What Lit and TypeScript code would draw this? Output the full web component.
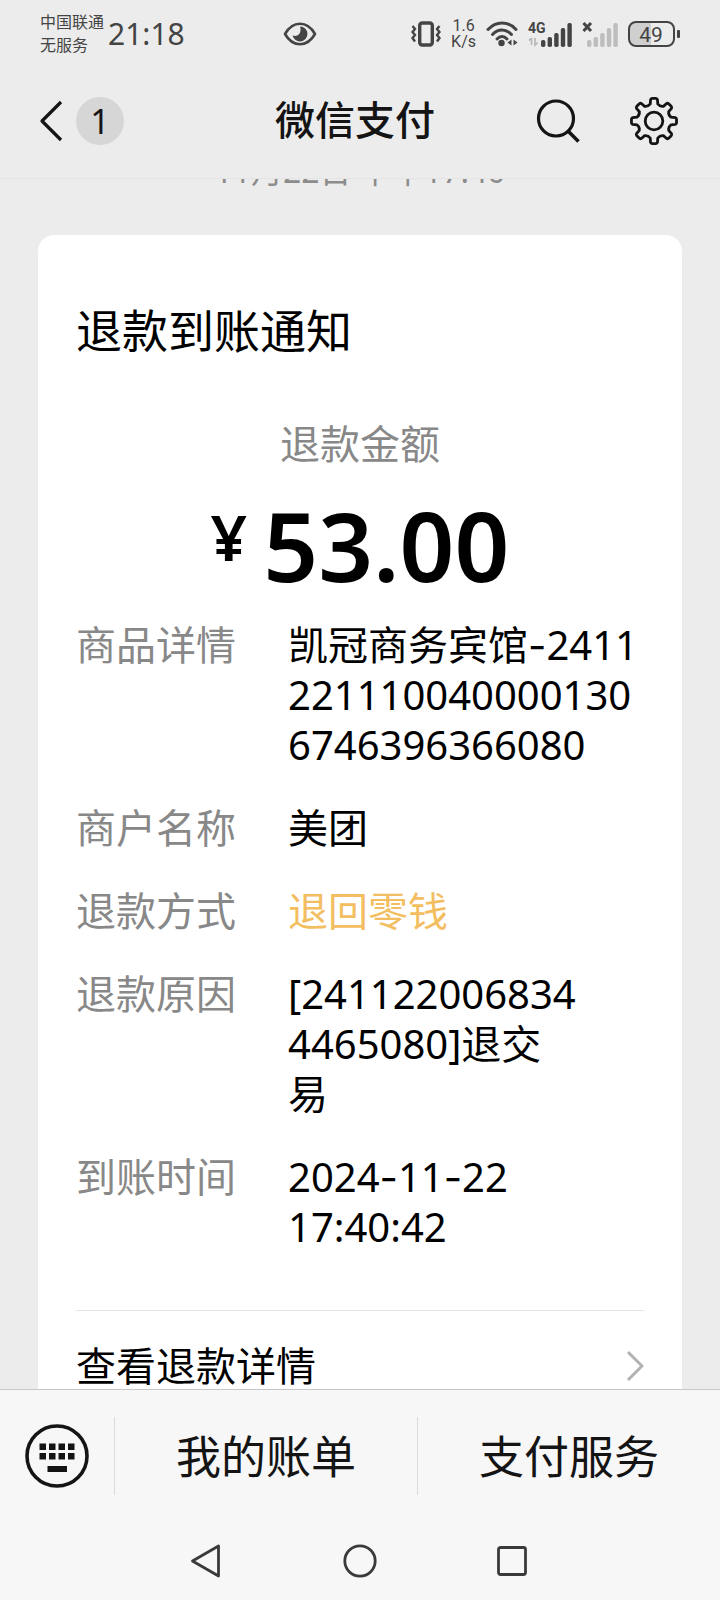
import { LitElement, html, svg, css } from "lit";
import { customElement, property } from "lit/decorators.js";

interface DetailRow {
  label: string;
  value: string;
  accent?: boolean;
}

const ROWS: DetailRow[] = [
  { label: "商品详情", value: "凯冠商务宾馆-2411\n221110040000130\n6746396366080" },
  { label: "商户名称", value: "美团" },
  { label: "退款方式", value: "退回零钱", accent: true },
  { label: "退款原因", value: "[241122006834\n4465080]退交\n易" },
  { label: "到账时间", value: "2024-11-22\n17:40:42" },
];

@customElement("status-bar")
export class StatusBar extends LitElement {
  static styles = css`
    :host {
      display: grid;
      grid-template-columns: 38% auto 1fr;
      align-items: center;
      height: 68px;
      padding: 0 40px;
      color: #444;
    }
    .left,
    .right {
      display: flex;
      align-items: center;
    }
    .left {
      gap: 4px;
    }
    .right {
      justify-content: flex-end;
      gap: 10px;
    }
    .carrier {
      font-size: 16px;
      line-height: 23px;
      white-space: nowrap;
    }
    .time {
      font-size: 30px;
      line-height: 40px;
    }
    .speed {
      font-family: Roboto, sans-serif;
      font-size: 16px;
      line-height: 16px;
      text-align: center;
    }
    .speed span {
      display: block;
    }
    svg {
      display: block;
      flex: none;
    }
    .tag {
      font-family: Roboto, sans-serif;
      font-size: 14px;
      font-weight: 700;
    }
    .level {
      font-family: Roboto, sans-serif;
      font-size: 21px;
    }
  `;

  private bars(x: number, color: string) {
    const heights = [7, 10, 14, 19, 24];
    return heights.map(
      (h, i) => svg`<rect x=${x + i * 6.6} y=${26 - h} width="4.400" height=${h} rx="1.800" fill=${color} />`
    );
  }

  render() {
    return html`
      <div class="left">
        <div class="carrier">中国联通<br />无服务</div>
        <div class="time">21:18</div>
      </div>
      <svg width="34" height="24" viewBox="0 0 34 24" aria-hidden="true">
        <path d="M2 12C6 5 11 1.800 17 1.800S28 5 32 12C28 19 23 22.200 17 22.200S6 19 2 12Z" fill="none" stroke="#444" stroke-width="2.600" stroke-linejoin="round" />
        <path d="M17 4.500a7.500 7.500 0 1 1-7.400 8.800c2 1.400 5 .8 6.600-1.200 1.800-2.300 1.600-5.300.8-7.600Z" fill="#444" />
      </svg>
      <div class="right">
        <svg width="30" height="26" viewBox="0 0 30 26" fill="none" stroke="#444" aria-hidden="true">
          <rect x="8.700" y="2" width="12.600" height="22" rx="2.500" stroke-width="3.400" />
          <path d="M1.500 5 4 8 1.500 11 4 14 1.500 17 4 20.500M28.500 5 26 8l2.500 3L26 14l2.500 3L26 20.500" stroke-width="2.400" />
        </svg>
        <div class="speed"><span>1.6</span><span>K/s</span></div>
        <svg width="32" height="26" viewBox="0 0 32 26" fill="none" stroke="#444" stroke-linecap="round" aria-hidden="true">
          <path d="M2 8.500C10-.3 22-.3 30 8.500" stroke-width="3" />
          <path d="M6.500 13.500c5.500-6 13.500-6 19 0" stroke-width="3" />
          <path d="M11 18c3-3.200 7-3.200 10 0" stroke-width="3" />
          <circle cx="15.500" cy="22" r="3.200" fill="#444" stroke="none" />
          <path d="M25.500 18.500v6L21.500 21.500Zm2 0v6l4-3Z" fill="#444" stroke="none" />
        </svg>
        <svg width="44" height="26" viewBox="0 0 44 26" role="img" aria-label="4G">
          <text class="tag" x="0" y="12" fill="#444">4G</text>
          <path d="M3.500 17v7M3.500 17 1 19.500M7 17v7l2.500-2.500" fill="none" stroke="#b5b5b5" stroke-width="1.600" />
          ${this.bars(13, "#444")}
        </svg>
        <svg width="36" height="26" viewBox="0 0 36 26" aria-hidden="true">
          <path d="m1.500 2 7.500 8m0-8-7.500 8" stroke="#444" stroke-width="3" />
          ${this.bars(5, "#bdbdbd")}
        </svg>
        <svg width="52" height="26" viewBox="0 0 52 26" role="img" aria-label="49%">
          <path d="M8 1.500h15v23H8a6.500 6.500 0 0 1-6.500-6.500V8A6.500 6.500 0 0 1 8 1.500Z" fill="#cfcfcf" />
          <rect x="1" y="1" width="45" height="24" rx="7" fill="none" stroke="#444" stroke-width="2" />
          <rect x="49" y="9" width="3" height="8" rx="1" fill="#444" />
          <text class="level" x="23" y="20.500" text-anchor="middle" fill="#444">49</text>
        </svg>
      </div>
    `;
  }
}

@customElement("chat-header")
export class ChatHeader extends LitElement {
  static styles = css`
    :host {
      display: grid;
      grid-template-columns: 1fr auto 1fr;
      align-items: center;
      height: 106px;
      padding: 0 42px 4px 32px;
      border-bottom: 1px solid #e4e4e4;
      color: #141414;
    }
    button {
      display: flex;
      align-items: center;
      padding: 0;
      border: 0;
      background: none;
      color: inherit;
      font: inherit;
      cursor: pointer;
    }
    svg {
      display: block;
    }
    .back {
      gap: 10px;
      padding-left: 6px;
    }
    .badge {
      width: 48px;
      height: 48px;
      border-radius: 50%;
      background: #d6d6d6;
      font-size: 34px;
      line-height: 48px;
      text-align: center;
    }
    h1 {
      margin: 0;
      padding-bottom: 3px;
      font-size: 40px;
      line-height: 50px;
      font-weight: 500;
    }
    .actions {
      display: flex;
      justify-content: flex-end;
      gap: 50px;
    }
  `;

  private gearPath() {
    const teeth = 8;
    const parts: string[] = [];
    for (let i = 0; i < teeth; i++) {
      const a = (i * 2 * Math.PI) / teeth - Math.PI / 2;
      const p = (r: number, d: number) =>
        `${(24 + r * Math.cos(a + d)).toFixed(2)} ${(24 + r * Math.sin(a + d)).toFixed(2)}`;
      parts.push(
        `${i ? "L" : "M"}${p(17.4, -0.22)}L${p(21.6, -0.16)}Q${p(22.6, -0.14)} ${p(22.6, -0.08)}L${p(22.6, 0.08)}Q${p(22.6, 0.14)} ${p(21.6, 0.16)}L${p(17.4, 0.22)}Q${p(15.4, 0.39)} ${p(17.4, 0.565)}`
      );
    }
    return parts.join("") + "Z";
  }

  render() {
    return html`
      <div>
        <button class="back" aria-label="返回">
          <svg width="28" height="44" viewBox="0 0 28 44" fill="none" stroke="currentColor" stroke-width="3.200">
            <path d="M23 3 4 22 23 41" stroke-linejoin="round" />
          </svg>
          <span class="badge">1</span>
        </button>
      </div>
      <h1>微信支付</h1>
      <div class="actions">
        <button aria-label="搜索">
          <svg width="44" height="48" viewBox="0 0 44 48" fill="none" stroke="currentColor" stroke-width="3.200">
            <circle cx="20" cy="21.500" r="17.500" />
            <path d="M32 34 42.500 44.500" stroke-width="3.600" />
          </svg>
        </button>
        <button aria-label="设置">
          <svg width="48" height="48" viewBox="0 0 48 48" fill="none" stroke="currentColor" stroke-width="2.800" stroke-linejoin="round">
            <path d=${this.gearPath()} />
            <circle cx="24" cy="24" r="8.800" />
          </svg>
        </button>
      </div>
    `;
  }
}

@customElement("refund-card")
export class RefundCard extends LitElement {
  @property({ attribute: false }) rows: DetailRow[] = [];

  static styles = css`
    :host {
      display: block;
      padding: 65px 38px 40px;
      border-radius: 16px;
      background: #fff;
      color: #000;
      font-size: 40px;
      line-height: 50px;
    }
    h2 {
      margin: 0 0 59px;
      font-size: 46px;
      line-height: 60px;
      font-weight: 400;
    }
    .caption {
      color: #888;
      text-align: center;
    }
    .amount {
      display: flex;
      justify-content: center;
      gap: 16px;
      margin: 28px 0 27px;
      font-size: 96px;
      line-height: 96px;
      font-weight: 600;
    }
    .currency {
      font-size: 64px;
      line-height: 80px;
    }
    dl {
      display: flex;
      flex-direction: column;
      gap: 33px;
      margin: 0 0 58px;
    }
    .row {
      display: grid;
      grid-template-columns: 160px 1fr;
      column-gap: 52px;
    }
    dt {
      color: #888;
    }
    dd {
      margin: 0;
      white-space: pre;
    }
    .dash {
      font-family: Inter, sans-serif;
      line-height: 1;
    }
    .accent {
      color: #f3be5f;
    }
    .more {
      display: flex;
      justify-content: space-between;
      align-items: center;
      padding-top: 30px;
      border-top: 1px solid #e5e5e5;
      color: inherit;
      text-decoration: none;
    }
  `;

  /* Inter's wide hyphen separates the digit groups more clearly. */
  private dashed(value: string) {
    return value.split("-").map((part, i) => (i ? html`<span class="dash">-</span>${part}` : part));
  }

  render() {
    return html`
      <h2>退款到账通知</h2>
      <div class="caption">退款金额</div>
      <div class="amount"><span class="currency">¥</span><span>53.00</span></div>
      <dl>
        ${this.rows.map(
          (r) => html`<div class="row">
            <dt>${r.label}</dt>
            <dd class=${r.accent ? "accent" : ""}>${this.dashed(r.value)}</dd>
          </div>`
        )}
      </dl>
      <a class="more" href="#detail">
        <span>查看退款详情</span>
        <svg width="18" height="32" viewBox="0 0 18 32" fill="none" stroke="#b2b2b2" stroke-width="3">
          <path d="M2 2 16 16 2 30" />
        </svg>
      </a>
    `;
  }
}

@customElement("menu-bar")
export class MenuBar extends LitElement {
  static styles = css`
    :host {
      display: grid;
      grid-template-columns: 114px 1fr 1fr;
      padding: 27px 0 25px;
      border-top: 1px solid #c8c8c8;
    }
    button {
      display: flex;
      align-items: center;
      justify-content: center;
      height: 78px;
      padding: 0;
      border: 0;
      background: none;
      color: #141414;
      font: inherit;
      font-size: 45px;
      line-height: 60px;
      cursor: pointer;
    }
    .item {
      padding-top: 1px;
      border-left: 1px solid #dcdcdc;
    }
  `;

  render() {
    return html`
      <button aria-label="键盘">
        <svg width="64" height="64" viewBox="0 0 64 64" fill="#141414">
          <circle cx="32" cy="32" r="30" fill="none" stroke="#141414" stroke-width="3.600" />
          ${[0, 1].map((r) =>
            [0, 1, 2, 3].map(
              (c) => svg`<rect x=${14.5 + c * 9.5} y=${19.5 + r * 9.5} width="6.500" height="6.500" />`
            )
          )}
          <rect x="22.500" y="42" width="19.500" height="6" />
        </svg>
      </button>
      <button class="item">我的账单</button>
      <button class="item">支付服务</button>
    `;
  }
}

@customElement("system-nav")
export class SystemNav extends LitElement {
  static styles = css`
    :host {
      display: flex;
      justify-content: center;
      gap: 116px;
      padding: 23px 0 21px;
    }
    button {
      padding: 0;
      border: 0;
      background: none;
      cursor: pointer;
    }
    svg {
      display: block;
    }
  `;

  render() {
    return html`
      <button aria-label="返回">
        <svg width="36" height="36" viewBox="0 0 36 36" fill="none" stroke="#3a3a3a" stroke-width="2.800" stroke-linejoin="round">
          <path d="M28.500 3v30L2.500 18Z" />
        </svg>
      </button>
      <button aria-label="主页">
        <svg width="36" height="36" viewBox="0 0 36 36" fill="none" stroke="#3a3a3a" stroke-width="2.800">
          <circle cx="18" cy="18" r="15.200" />
        </svg>
      </button>
      <button aria-label="最近任务">
        <svg width="36" height="36" viewBox="0 0 36 36" fill="none" stroke="#3a3a3a" stroke-width="2.800">
          <rect x="4.500" y="4.500" width="27" height="27" rx="2" />
        </svg>
      </button>
    `;
  }
}

@customElement("app-root")
export class AppRoot extends LitElement {
  static styles = css`
    :host {
      display: flex;
      flex-direction: column;
      height: 100vh;
      background: #ececec;
      font-family: "Noto Sans", "Noto Sans CJK SC", sans-serif;
    }
    .messages {
      flex: 1;
      min-height: 0;
      overflow: hidden;
      padding: 0 38px;
    }
    /* The list is scrolled so that the date line sits half under the header. */
    .date {
      margin: -30px 0 42px;
      color: #8c8c8c;
      font-size: 32px;
      line-height: 44px;
      text-align: center;
    }
    .bottom {
      background: #f7f7f7;
    }
  `;

  render() {
    return html`
      <status-bar></status-bar>
      <chat-header></chat-header>
      <main class="messages">
        <div class="date">11月22日 下午17:40</div>
        <refund-card .rows=${ROWS}></refund-card>
      </main>
      <footer class="bottom">
        <menu-bar></menu-bar>
        <system-nav></system-nav>
      </footer>
    `;
  }
}
